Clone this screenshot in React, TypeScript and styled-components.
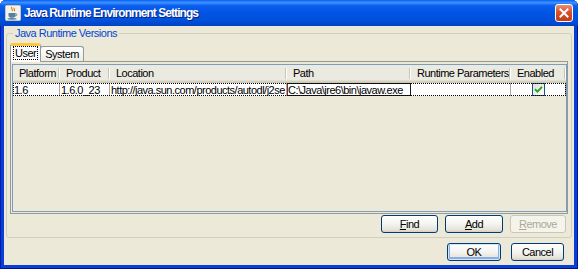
import React from 'react';
import styled, { createGlobalStyle, css } from 'styled-components';

const GlobalStyle = createGlobalStyle`
  html, body { margin: 0; padding: 0; background: #ffffff; }
  body {
    font-family: "Liberation Sans", Arial, sans-serif;
    font-size: 11px;
    letter-spacing: -0.5px;
    color: #000;
  }
  * { box-sizing: border-box; }
`;

const COLUMNS = [
  { title: 'Platform', width: 47 },
  { title: 'Product', width: 50 },
  { title: 'Location', width: 177 },
  { title: 'Path', width: 124 },
  { title: 'Runtime Parameters', width: 100 },
  { title: 'Enabled', width: 55 },
];

const GRID = COLUMNS.map(c => `${c.width}px`).join(' ');

const Window = styled.div`
  width: 578px;
  height: 269px;
  display: flex;
  flex-direction: column;
  background: #0A3FD6;
  box-shadow: inset 1px 0 #0019A8, inset -1px 0 #00138C, inset 0 -1px #00138C;
  border-radius: 6px 6px 0 0;
  overflow: hidden;
`;

const TitleBar = styled.div`
  height: 26px;
  flex: none;
  display: flex;
  align-items: center;
  padding: 0 5px 0 5px;
  background: linear-gradient(
    to bottom,
    #0A5FF2 0%,
    #3B92FF 10%,
    #0B5DEE 22%,
    #0054E3 50%,
    #0050DA 80%,
    #0043C4 100%
  );
`;

const TitleText = styled.span`
  flex: 1;
  margin-left: 3px;
  color: #fff;
  font-weight: bold;
  font-size: 12px;
  letter-spacing: -0.95px;
  text-shadow: 1px 1px #0A1E80;
`;

const CloseButton = styled.div`
  width: 18px;
  height: 18px;
  border: 1px solid #fff;
  border-radius: 3px;
  background: linear-gradient(to bottom, #E98F72, #D6512C 45%, #C23C18);
  display: flex;
  align-items: center;
  justify-content: center;
`;

const Client = styled.div`
  flex: 1;
  margin: 0 4px 4px 4px;
  background: #ECE9D8;
  display: flex;
  flex-direction: column;
  padding: 1px 0 4px 0;
`;

const GroupBox = styled.fieldset`
  margin: 0 2px;
  padding: 3px 3px 4px 3px;
  border: 1px solid #D0D0BF;
  border-radius: 3px;
  min-width: 0;
`;

const Legend = styled.legend`
  margin-left: 3px;
  padding: 0 2px;
  line-height: 13px;
  color: #0046D5;
`;

const TabStrip = styled.div`
  display: flex;
  align-items: flex-end;
  height: 18px;
  position: relative;
  z-index: 1;
`;

const Tab = styled.div<{ $selected?: boolean }>`
  padding: 0 4px;
  border: 1px solid #919B9C;
  border-bottom: none;
  border-radius: 3px 3px 0 0;
  background: linear-gradient(to bottom, #FFFFFF, #F3F3EF 60%, #EBEAE3);
  line-height: 14px;
  height: 15px;
  margin-left: -1px;
  ${p =>
    p.$selected &&
    css`
      height: 19px;
      margin-left: 0;
      margin-bottom: -1px;
      border-top: 3px solid #FFC83C;
      background: #FCFCFE;
      padding: 1px 3px 0 3px;
      line-height: 12px;
    `}
`;

const FocusLabel = styled.span`
  outline: 1px dotted #000;
  padding: 0 1px;
`;

const TabPanel = styled.div`
  height: 153px;
  border: 1px solid #919B9C;
  background: #ECE9D8;
  padding: 2px 1px 1px 1px;
  display: flex;
`;

const ScrollPane = styled.div`
  flex: 1;
  border: 1px solid #7F9DB9;
  background: #ECE9D8;
  display: flex;
  flex-direction: column;
`;

const HeaderRow = styled.div`
  display: grid;
  grid-template-columns: ${GRID};
  height: 18px;
  background: #EBEAE0;
  box-shadow: inset 0 -1px #CBC7B8, inset 0 -2px #D6D2C2, inset 0 -3px #E2DECD;
`;

const HeaderCell = styled.div`
  position: relative;
  padding-left: 6px;
  line-height: 16px;
  white-space: nowrap;
  overflow: hidden;
  &::after {
    content: '';
    position: absolute;
    right: 1px;
    top: 3px;
    bottom: 4px;
    width: 1px;
    background: #C7C5B2;
    box-shadow: 1px 0 #FFFFFF;
  }
`;

const DataRow = styled.div`
  display: grid;
  grid-template-columns: ${GRID};
  height: 13px;
  background: #fff;
  outline: 1px dotted #000;
  outline-offset: -1px;
`;

const Cell = styled.div<{ $focused?: boolean; $center?: boolean }>`
  line-height: 12px;
  padding-left: 1px;
  white-space: nowrap;
  overflow: hidden;
  border-right: 1px solid #A8A8A8;
  display: flex;
  align-items: center;
  ${p => p.$center && css`justify-content: center;`}
  ${p =>
    p.$focused &&
    css`
      border: 1px solid #1A1A1A;
      border-left-color: #8B2A1A;
      padding-left: 0;
    `}
`;

const Check = styled.div`
  width: 13px;
  height: 13px;
  border: 1px solid #1C5180;
  background: linear-gradient(135deg, #DCDCD7, #FFFFFF);
  display: flex;
  align-items: center;
  justify-content: center;
`;

const ButtonRow = styled.div<{ $gap: number; $right: number; $top: number }>`
  display: flex;
  justify-content: flex-end;
  gap: ${p => p.$gap}px;
  margin-top: ${p => p.$top}px;
  padding-right: ${p => p.$right}px;
`;

const Button = styled.div<{ $w: number; $disabled?: boolean; $default?: boolean }>`
  width: ${p => p.$w}px;
  height: 18px;
  border: 1px solid #003C74;
  border-radius: 3px;
  background: linear-gradient(to bottom, #FFFFFF, #F4F4F0 50%, #E6E3DA 85%, #D6D0C5);
  display: flex;
  align-items: center;
  justify-content: center;
  line-height: 12px;
  ${p =>
    p.$default &&
    css`
      box-shadow: inset 0 0 0 1px #CEE7FF, inset 0 -1px 0 2px #89ADE4;
    `}
  ${p =>
    p.$disabled &&
    css`
      border-color: #C9C7BA;
      background: #F5F4EA;
      color: #ACA899;
    `}
`;

const JavaIcon = () => (
  <svg width="16" height="16" viewBox="0 0 16 16">
    <rect x="0.5" y="0.5" width="15" height="15" rx="1" fill="#F4F2EA" stroke="#C9C6B6" />
    <path d="M7 2c-1.6 1.6 1.6 2.4 0 4.2M9.3 2.8c-1.2 1.2 1.2 2 0 3.4" stroke="#E76F00" strokeWidth="1.1" fill="none" />
    <path d="M3.5 8h7v2.2c0 1.8-1.7 2.6-3.5 2.6s-3.5-0.8-3.5-2.6z" fill="#5382A1" />
    <path d="M10.5 8.6c1.8 0 1.8 2.3-0.3 2.3" stroke="#5382A1" fill="none" />
    <ellipse cx="7" cy="13.8" rx="4.6" ry="0.9" fill="#5382A1" />
  </svg>
);

const CloseIcon = () => (
  <svg width="10" height="10" viewBox="0 0 10 10">
    <path d="M1.5 1.5l7 7M8.5 1.5l-7 7" stroke="#fff" strokeWidth="2" strokeLinecap="square" />
  </svg>
);

const CheckMark = () => (
  <svg width="9" height="9" viewBox="0 0 9 9">
    <path d="M1 4.2l2.4 2.4L8 1.8" stroke="#21A121" strokeWidth="1.8" fill="none" />
  </svg>
);

const Mn = styled.span`
  text-decoration: underline;
`;

export default function App() {
  return (
    <>
      <GlobalStyle />
      <Window>
        <TitleBar>
          <JavaIcon />
          <TitleText>Java Runtime Environment Settings</TitleText>
          <CloseButton>
            <CloseIcon />
          </CloseButton>
        </TitleBar>
        <Client>
          <GroupBox>
            <Legend>Java Runtime Versions</Legend>
            <TabStrip>
              <Tab $selected>
                <FocusLabel>User</FocusLabel>
              </Tab>
              <Tab>System</Tab>
            </TabStrip>
            <TabPanel>
              <ScrollPane>
                <HeaderRow>
                  {COLUMNS.map(c => (
                    <HeaderCell key={c.title}>{c.title}</HeaderCell>
                  ))}
                </HeaderRow>
                <DataRow>
                  <Cell>1.6</Cell>
                  <Cell>1.6.0_23</Cell>
                  <Cell>http://java.sun.com/products/autodl/j2se</Cell>
                  <Cell $focused>C:\Java\jre6\bin\javaw.exe</Cell>
                  <Cell></Cell>
                  <Cell $center>
                    <Check>
                      <CheckMark />
                    </Check>
                  </Cell>
                </DataRow>
              </ScrollPane>
            </TabPanel>
            <ButtonRow $gap={7} $right={2} $top={1}>
              <Button $w={57}>
                <Mn>F</Mn>ind
              </Button>
              <Button $w={58}>
                <Mn>A</Mn>dd
              </Button>
              <Button $w={56} $disabled>
                <Mn>R</Mn>emove
              </Button>
            </ButtonRow>
          </GroupBox>
          <ButtonRow $gap={10} $right={10} $top={5}>
            <Button $w={54} $default>
              OK
            </Button>
            <Button $w={53}>Cancel</Button>
          </ButtonRow>
        </Client>
      </Window>
    </>
  );
}
